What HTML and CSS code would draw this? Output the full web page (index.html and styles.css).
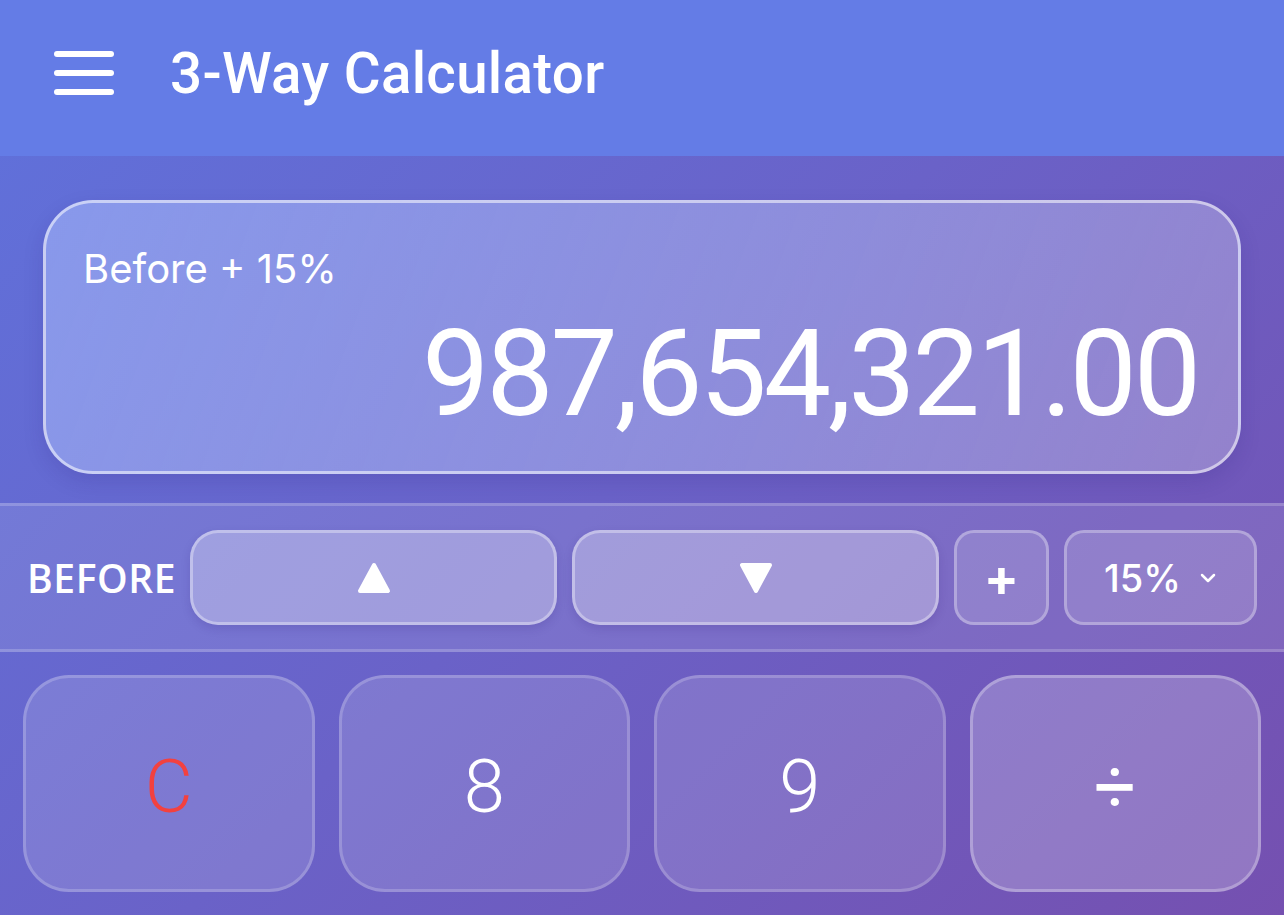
FILE: index.html
```html
<!DOCTYPE html>
<html lang="en">
<head>
    <meta charset="UTF-8">
    <meta name="viewport" content="width=device-width, initial-scale=1.0">
    <title>3-Way Calculator</title>
    <link rel="stylesheet" href="styles.css">
</head>
<body>
    <header class="topbar">
        <button class="menu-btn" aria-label="Menu">
            <span></span><span></span><span></span>
        </button>
        <h1 class="app-title">3-Way Calculator</h1>
    </header>

    <main class="calc">
        <section class="display">
            <div class="display-label">Before + 15%</div>
            <div class="display-value">987,654,321.00</div>
        </section>

        <section class="mode-bar">
            <span class="mode-name">BEFORE</span>
            <button class="mode-btn step">
                <svg width="36" height="34" viewBox="0 0 36 34"><path d="M18 4 L32 30 L4 30 Z" fill="#fff" stroke="#fff" stroke-width="4" stroke-linejoin="round"/></svg>
            </button>
            <button class="mode-btn step">
                <svg width="36" height="34" viewBox="0 0 36 34"><path d="M4 4 L32 4 L18 30 Z" fill="#fff" stroke="#fff" stroke-width="4" stroke-linejoin="round"/></svg>
            </button>
            <button class="mode-btn op">+</button>
            <button class="mode-btn pct">15% <svg width="18" height="12" viewBox="0 0 18 12"><path d="M3 3 L9 9 L15 3" fill="none" stroke="#fff" stroke-width="2.5" stroke-linecap="round" stroke-linejoin="round"/></svg></button>
        </section>

        <section class="keypad">
            <button class="key clear">C</button>
            <button class="key">8</button>
            <button class="key">9</button>
            <button class="key operator">÷</button>
        </section>
    </main>
</body>
</html>
```

FILE: styles.css
```css
body {
    margin: 0;
    padding: 0;
    height: 915px;
    overflow: hidden;
    font-family: 'Inter', 'Roboto', sans-serif;
    background: linear-gradient(135deg, #5f72dc 0%, #6a62c8 50%, #7550b0 100%);
    color: #fff;
}
button {
    font-family: inherit;
    color: #fff;
    cursor: pointer;
}
.topbar {
    height: 156px;
    display: flex;
    align-items: center;
    padding-left: 54px;
    background-color: #647ce6;
}
.menu-btn {
    width: 60px;
    height: 44px;
    padding: 0;
    margin-top: -10px;
    border: none;
    background: none;
    display: flex;
    flex-direction: column;
    justify-content: space-between;
}
.menu-btn span {
    display: block;
    height: 6px;
    width: 100%;
    border-radius: 3px;
    background: #fff;
}
.app-title {
    margin: -8px 0 0 56px;
    font-family: 'Roboto', sans-serif;
    font-weight: 500;
    font-size: 56.5px;
    letter-spacing: 0.3px;
}
.calc {
    padding-top: 44px;
}
.display {
    margin: 0 43px;
    height: 274px;
    box-sizing: border-box;
    padding: 38px 40px 0 37px;
    border: 3px solid rgba(255, 255, 255, 0.55);
    border-radius: 50px;
    background: linear-gradient(110deg, rgba(175, 195, 255, 0.5), rgba(255, 255, 255, 0.25));
    box-shadow: 0 8px 20px rgba(40, 30, 120, 0.15);
}
.display-label {
    font-size: 40px;
    line-height: 56px;
}
.display-value {
    text-align: right;
    font-family: 'Roboto', sans-serif;
    font-weight: 400;
    font-size: 120px;
    line-height: 130px;
    letter-spacing: -3.2px;
    margin-top: 12px;
}
.mode-bar {
    margin-top: 29px;
    height: 149px;
    box-sizing: border-box;
    display: flex;
    align-items: center;
    gap: 15px;
    padding: 0 27px;
    background: rgba(255, 255, 255, 0.1);
    border-top: 3px solid rgba(255, 255, 255, 0.2);
    border-bottom: 3px solid rgba(255, 255, 255, 0.2);
}
.mode-name {
    font-family: 'Open Sans', sans-serif;
    font-weight: 600;
    font-size: 39px;
    letter-spacing: 0.6px;
    width: 148px;
}
.mode-btn {
    height: 95px;
    border-radius: 28px;
    border: 3px solid rgba(255, 255, 255, 0.3);
    background: rgba(255, 255, 255, 0.15);
    display: flex;
    align-items: center;
    justify-content: center;
    padding: 0;
}
.mode-btn.step {
    flex: 1;
    background: rgba(255, 255, 255, 0.3);
    border-color: rgba(255, 255, 255, 0.35);
    box-shadow: 0 4px 10px rgba(50, 30, 120, 0.15);
}
.mode-btn.op {
    width: 95px;
    font-size: 52px;
    font-weight: 700;
    border-radius: 20px;
}
.mode-btn.pct {
    width: 193px;
    gap: 18px;
    font-size: 38px;
    font-weight: 500;
    border-radius: 20px;
}
.keypad {
    display: grid;
    grid-template-columns: repeat(4, 1fr);
    gap: 24px;
    padding: 23px 23px 0;
}
.key {
    height: 217px;
    border-radius: 46px;
    border: 3px solid rgba(255, 255, 255, 0.2);
    background: rgba(255, 255, 255, 0.14);
    font-family: 'Roboto', sans-serif;
    font-weight: 300;
    font-size: 74px;
    padding: 6px 0 0;
}
.key.clear {
    color: #f2413f;
}
.key.operator {
    background: rgba(255, 255, 255, 0.22);
    border-color: rgba(255, 255, 255, 0.28);
    font-weight: 400;
}
```
